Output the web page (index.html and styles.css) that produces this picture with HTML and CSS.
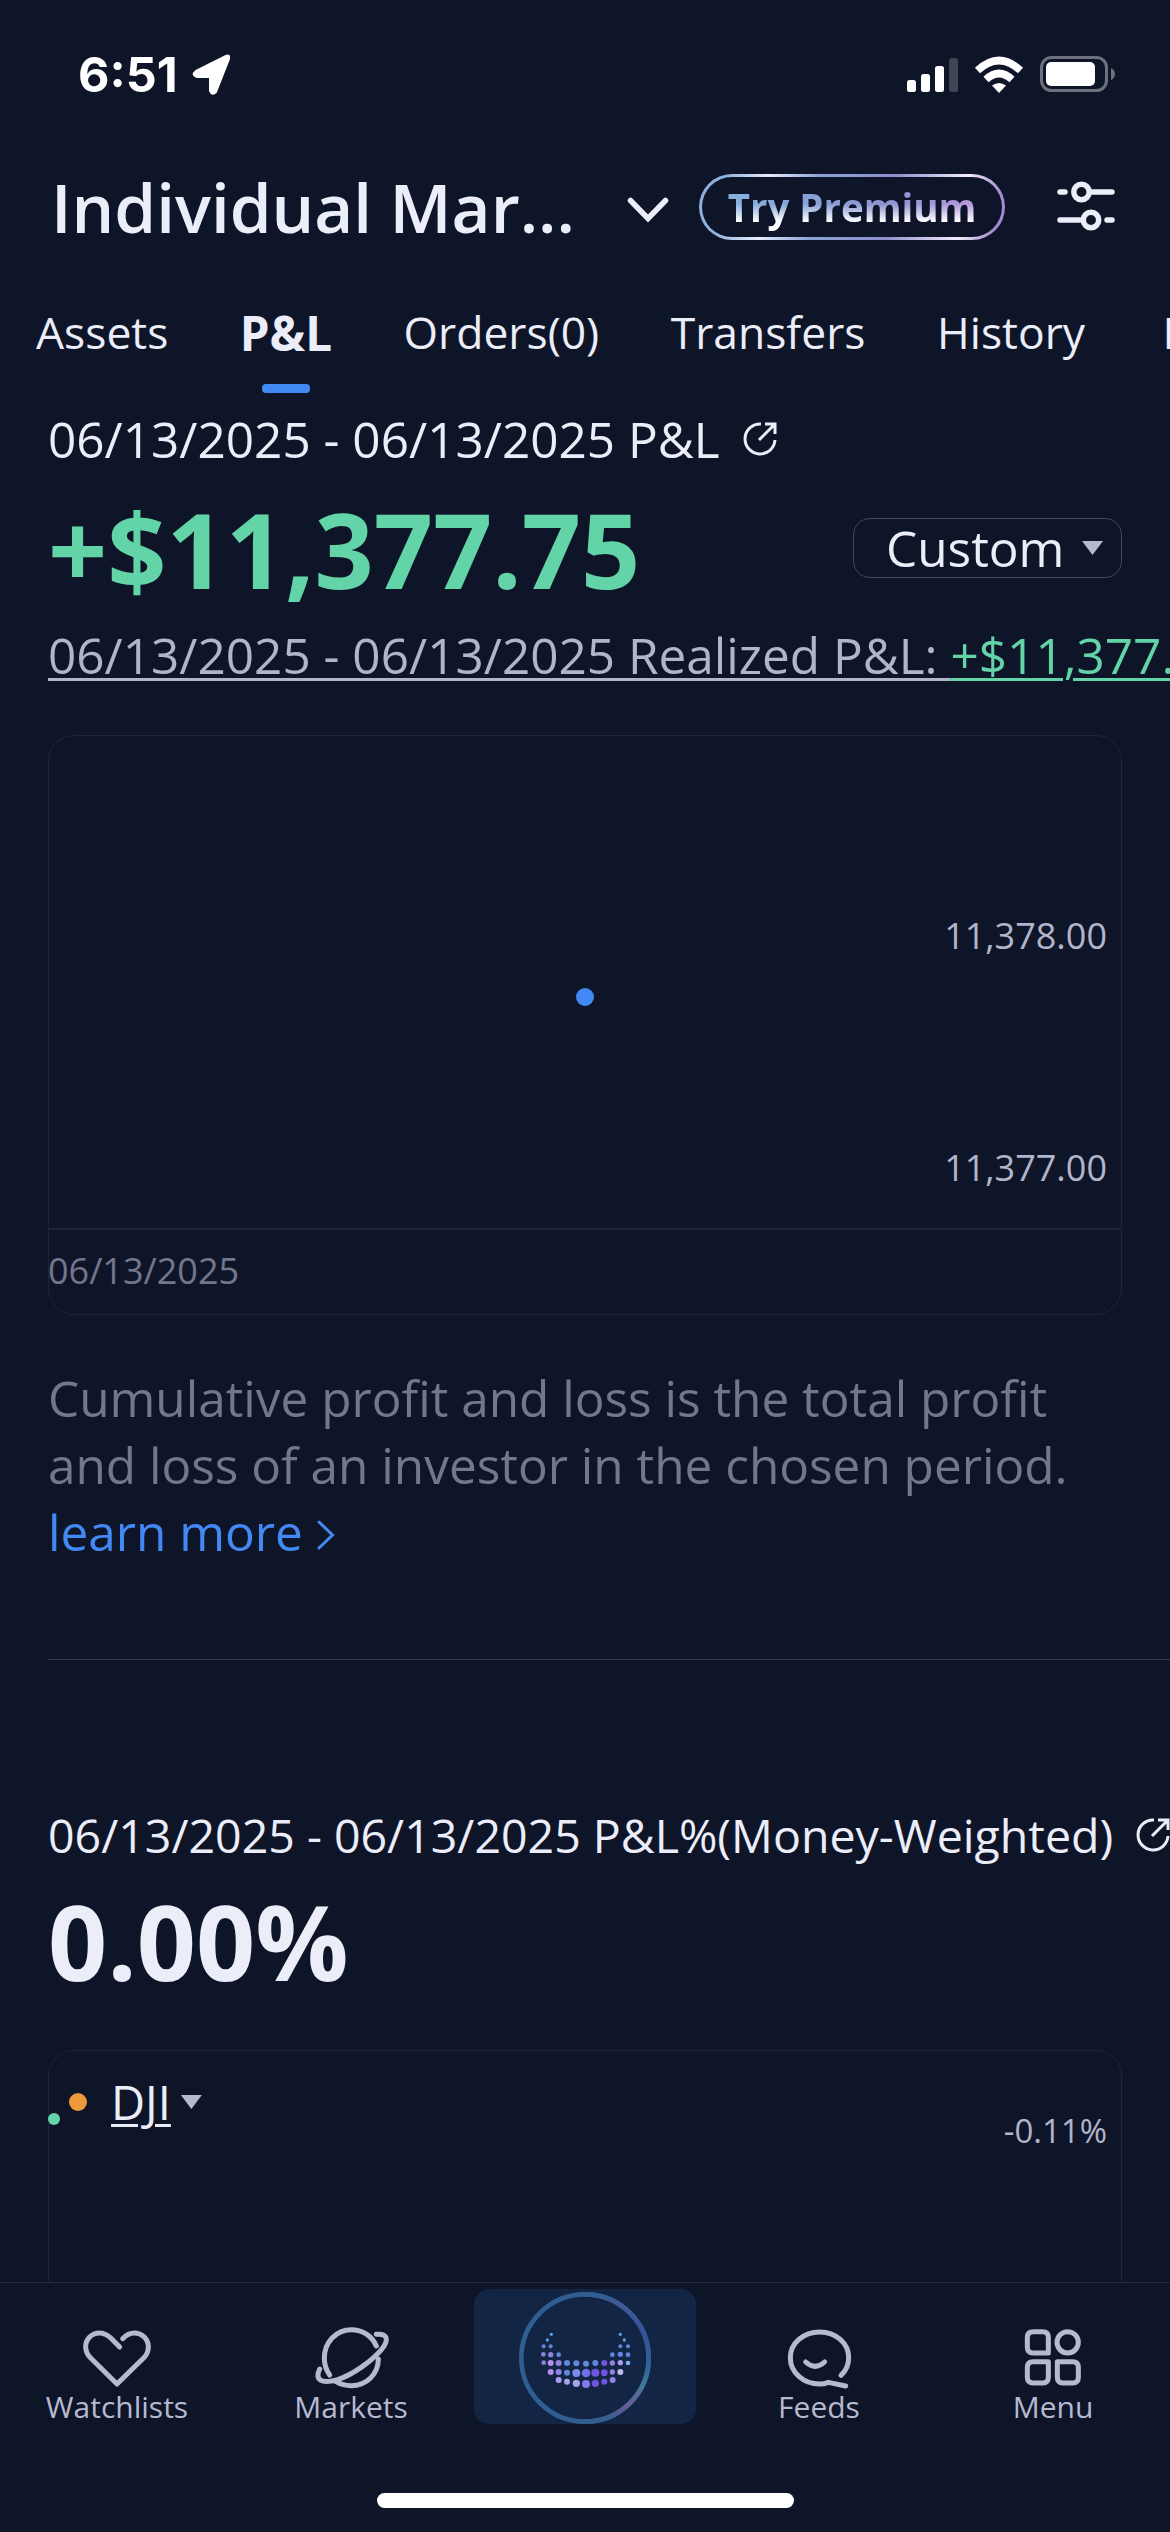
FILE: index.html
```html
<!DOCTYPE html>
<html lang="en">
<head>
    <meta charset="utf-8">
    <title>Account P&amp;L</title>
    <link rel="stylesheet" href="styles.css">
</head>
<body>
    <div class="status-bar">
        <span class="time">6:51</span>
        <svg class="location" width="40" height="44" viewBox="0 0 40 44">
            <path d="M4 18 L34 3 Q38 1 37 6 L24 39 Q20 43 18 38 V24 H5 Q-1 22 4 18Z" fill="#fff" stroke="#fff" stroke-width="2" stroke-linejoin="round"/>
        </svg>
        <svg class="signal" width="52" height="36" viewBox="0 0 52 36">
            <rect x="0" y="23" width="9" height="12" rx="2.5" fill="#fff"/>
            <rect x="14" y="17" width="9" height="18" rx="2.5" fill="#fff"/>
            <rect x="28" y="9" width="9" height="26" rx="2.5" fill="#fff"/>
            <rect x="42" y="1" width="9" height="34" rx="2.5" fill="#404453"/>
        </svg>
        <svg class="wifi" width="50" height="38" viewBox="0 0 50 38">
            <g fill="none" stroke="#fff" stroke-width="7.5">
                <path d="M3.5 14.5 Q25 -5.5 46.5 14.5"/>
                <path d="M12 23.5 Q25 11.5 38 23.5"/>
            </g>
            <path d="M18 29.5 Q25 24.5 32 29.5 L25 37Z" fill="#fff"/>
        </svg>
        <svg class="battery" width="76" height="38" viewBox="0 0 76 38">
            <rect x="1.5" y="1.5" width="65" height="33" rx="10" fill="none" stroke="#6d707d" stroke-width="3"/>
            <rect x="6" y="6" width="49" height="24" rx="5" fill="#fff"/>
            <path d="M71 12 Q75 14 75 18 Q75 22 71 24Z" fill="#6d707d"/>
        </svg>
    </div>

    <div class="header">
        <h1>Individual Mar...</h1>
        <svg class="chevron" width="44" height="30" viewBox="0 0 44 30">
            <path d="M4.5 5.5 L22 23.5 L39.5 5.5" fill="none" stroke="#ebedf8" stroke-width="5.5" stroke-linecap="round"/>
        </svg>
        <div class="premium"><span>Try Premium</span></div>
        <svg class="sliders" width="60" height="52" viewBox="0 0 60 52">
            <g fill="none" stroke="#ebedf8" stroke-width="5.5" stroke-linecap="round">
                <path d="M4 11 H9 M36 11 H56 M4 39 H24 M51 39 H56"/>
                <circle cx="25.5" cy="11" r="7.7"/>
                <circle cx="35" cy="39" r="7.7"/>
            </g>
        </svg>
    </div>

    <div class="tabs">
        <span>Assets</span>
        <span class="active">P&amp;L</span>
        <span>Orders(0)</span>
        <span>Transfers</span>
        <span>History</span>
        <span class="last">Documents</span>
    </div>

    <div class="content">
        <div class="title">
            <span>06/13/2025 - 06/13/2025 P&amp;L</span>
            <svg class="share" width="36" height="36" viewBox="0 0 36 36">
                <path d="M19 3 A15 15 0 1 0 33 19 M17 19 L32 4 M23 3 H33 V13" fill="none" stroke="#ebedf8" stroke-width="3"/>
            </svg>
        </div>
        <div class="value-row">
            <div class="value gain">+$11,377.75</div>
            <div class="select">Custom <i class="caret"></i></div>
        </div>
        <div class="realized">06/13/2025 - 06/13/2025 Realized P&amp;L: <span class="gain">+$11,377.75</span></div>

        <div class="chart">
            <div class="plot">
                <span class="axis-label high">11,378.00</span>
                <span class="axis-label low">11,377.00</span>
                <i class="point"></i>
            </div>
            <div class="chart-date">06/13/2025</div>
        </div>

        <p class="note">
            Cumulative profit and loss is the total profit<br>
            and loss of an investor in the chosen period.<br>
            <a>learn more<svg class="more" width="18" height="30" viewBox="0 0 18 30"><path d="M2 2 L15.5 15 L2 28" fill="none" stroke="#4389f6" stroke-width="3" stroke-linecap="round"/></svg></a>
        </p>

        <div class="divider"></div>

        <div class="title small">
            <span>06/13/2025 - 06/13/2025 P&amp;L%(Money-Weighted)</span>
            <svg class="share" width="36" height="36" viewBox="0 0 36 36">
                <path d="M19 3 A15 15 0 1 0 33 19 M17 19 L32 4 M23 3 H33 V13" fill="none" stroke="#ebedf8" stroke-width="3"/>
            </svg>
        </div>
        <div class="value-row second">
            <div class="value">0.00%</div>
        </div>

        <div class="chart benchmark">
            <div class="legend">
                <i class="dot"></i>
                <span>DJI</span>
                <i class="caret"></i>
            </div>
            <i class="start"></i>
            <span class="axis-label percent">-0.11%</span>
        </div>
    </div>

    <div class="nav">
        <div class="nav-item">
            <svg width="72" height="72" viewBox="243 187 216 216">
                <path d="M359 262 L330 233 Q314 220 299 220 A41 41 0 0 0 257 262 Q257 280 272 295 L351 373 L433 293 Q445 280 445 262 A42 42 0 0 0 403 220 Q384 220 368 237"/>
            </svg>
            <span>Watchlists</span>
        </div>
        <div class="nav-item">
            <svg width="72" height="72" viewBox="945 187 216 216">
                <path d="M1129 259 C1116 229 1088 210 1054 210 C1008 210 973 248 973 295 C973 314 979 332 989 346"/>
                <path d="M1135 298 C1135 343 1100 378 1054 378 C1038 378 1022 374 1008 366"/>
                <path d="M1129 224 C1160 221 1170 237 1145 269 C1116 303 1062 343 1015 359 C962 375 944 360 959 328"/>
            </svg>
            <span>Markets</span>
        </div>
        <div class="nav-item center">
            <svg width="222" height="135" viewBox="42 57 666 405">
                <defs>
                    <linearGradient id="ring" x1="0" y1="0" x2="0" y2="1">
                        <stop offset="0" stop-color="#2f5e91"/>
                        <stop offset=".09" stop-color="#435a94"/>
                        <stop offset=".3" stop-color="#34529a"/>
                        <stop offset=".55" stop-color="#32609a"/>
                        <stop offset=".72" stop-color="#44799a"/>
                        <stop offset=".87" stop-color="#675b96"/>
                        <stop offset="1" stop-color="#2f5e91"/>
                    </linearGradient>
                </defs>
                <circle cx="375" cy="264" r="191" fill="none" stroke="#2f5e91" stroke-width="14"/>
                <path d="M375 73 A191 191 0 0 1 375 455" fill="none" stroke="url(#ring)" stroke-width="14"/>
                <g fill="#5b9de0">
                    <circle cx="274" cy="193" r="5"/><circle cx="262" cy="210" r="5"/>
                    <circle cx="481" cy="193" r="5"/><circle cx="493" cy="210" r="5"/>
                </g>
                <g fill="#6287dc">
                    <circle cx="251" cy="229" r="6"/><circle cx="272" cy="229" r="6"/>
                    <circle cx="481" cy="229" r="6"/><circle cx="504" cy="229" r="6"/>
                    <circle cx="296" cy="254" r="7"/><circle cx="457" cy="254" r="7"/>
                    <circle cx="481" cy="253" r="8"/><circle cx="504" cy="254" r="7"/>
                    <circle cx="321" cy="279" r="9"/><circle cx="349" cy="280" r="9"/>
                    <circle cx="378" cy="281" r="9"/><circle cx="406" cy="279" r="9"/>
                    <circle cx="321" cy="308" r="9"/>
                </g>
                <g fill="#9182df">
                    <circle cx="250" cy="253" r="7"/><circle cx="272" cy="254" r="8"/>
                    <circle cx="251" cy="278" r="7"/><circle cx="296" cy="279" r="9"/>
                    <circle cx="457" cy="279" r="8"/><circle cx="296" cy="306" r="9"/>
                    <circle cx="457" cy="306" r="8"/><circle cx="458" cy="330" r="9"/>
                </g>
                <g fill="#b58df0">
                    <circle cx="272" cy="279" r="9"/><circle cx="272" cy="306" r="9"/>
                </g>
                <g fill="#aaa0ec">
                    <circle cx="481" cy="278" r="8"/><circle cx="296" cy="330" r="9"/>
                    <circle cx="321" cy="335" r="9"/><circle cx="349" cy="340" r="11"/>
                </g>
                <circle cx="504" cy="279" r="7" fill="#78b0ed"/>
                <circle cx="481" cy="306" r="9" fill="#c4bcef"/>
                <circle cx="349" cy="309" r="12" fill="#7c8bea"/>
                <circle cx="378" cy="309" r="13" fill="#6c6fe7"/>
                <g fill="#6d55dd">
                    <circle cx="433" cy="279" r="9"/><circle cx="406" cy="308" r="12"/>
                    <circle cx="433" cy="308" r="10"/><circle cx="406" cy="340" r="11"/>
                    <circle cx="433" cy="335" r="9"/>
                </g>
                <circle cx="378" cy="342" r="12" fill="#8179e9"/>
            </svg>
        </div>
        <div class="nav-item">
            <svg width="72" height="72" viewBox="129 187 216 216">
                <path d="M303 347 C316 335 326 316 326 294 C326 251 288 217 239 217 C190 217 151 251 151 294 C151 338 190 373 239 373 Q252 373 265 368 L317 379"/>
                <path d="M197 307 Q225 333 254 307"/>
            </svg>
            <span>Feeds</span>
        </div>
        <div class="nav-item">
            <svg width="72" height="72" viewBox="831 187 216 216">
                <path d="M880 216 H908 Q925 216 925 233 V280 H880 Q862 280 862 263 V233 Q862 216 880 216Z"/>
                <circle cx="983" cy="248" r="32"/>
                <path d="M880 306 H925 V353 Q925 370 908 370 H880 Q862 370 862 353 V323 Q862 306 880 306Z"/>
                <path d="M952 306 H998 Q1015 306 1015 323 V353 Q1015 370 998 370 H969 Q952 370 952 353Z"/>
            </svg>
            <span>Menu</span>
        </div>
        <div class="home-indicator"></div>
    </div>
</body>
</html>
```
FILE: styles.css
```css
* {
    box-sizing: border-box;
}
body {
    margin: 0;
    width: 1170px;
    height: 2532px;
    overflow: hidden;
    display: flex;
    flex-direction: column;
    background: #0f1528;
    color: #ebedf8;
    font-family: "Open Sans", "Noto Sans", sans-serif;
    font-size: 49.5px;
    font-variant-ligatures: none;
    white-space: nowrap;
}
svg {
    display: block;
    flex: none;
    overflow: visible;
}

/* Status bar */
.status-bar {
    height: 150px;
    padding: 0 54px 0 78px;
    display: flex;
    align-items: center;
    flex: none;
}
.time {
    width: 114px;
    font: bold 48.5px/50px Inter, sans-serif;
    color: #fff;
}
.signal {
    margin-left: auto;
    margin-right: -1px;
}
.wifi {
    margin: 0 16px;
}

/* Header */
.header {
    height: 114px;
    padding: 0 54px 0 51px;
    display: flex;
    align-items: center;
    flex: none;
}
h1 {
    margin: 0;
    width: 575px;
    font-size: 67.3px;
    font-weight: 600;
    line-height: 90px;
}
.chevron {
    margin-top: 6px;
}
.premium {
    margin: 0 auto 0 29px;
    width: 306px;
    height: 66px;
    border: 3px solid transparent;
    border-radius: 33px;
    text-align: center;
    font-size: 38.5px;
    font-weight: bold;
    line-height: 60px;
    background:
        linear-gradient(#0f1528, #0f1528) padding-box,
        linear-gradient(100deg, #8db0dd 8%, #e6ecfa 22%, #8ba3d6 38%, #8d8fce 62%, #f2ecfb 85%, #a48bd2 96%) border-box;
}
.premium span {
    display: block;
    background: linear-gradient(transparent 45%, #fff 74%), linear-gradient(90deg, #86b2de 8%, #8b93d0 60%, #b49add 90%);
    -webkit-background-clip: text;
    background-clip: text;
    color: transparent;
}

/* Tabs */
.tabs {
    height: 137px;
    padding-left: 36px;
    display: flex;
    gap: 71.5px;
    flex: none;
    font-size: 44.4px;
    line-height: 137px;
}
.tabs .active {
    position: relative;
    font-size: 47.5px;
    font-weight: bold;
}
.tabs .active::after {
    content: '';
    position: absolute;
    left: calc(50% - 24px);
    bottom: 8px;
    width: 48px;
    height: 9px;
    border-radius: 4px;
    background: #4389f6;
}
.tabs .last {
    margin-left: 6px;
}

/* Page content */
.content {
    flex: 1;
    min-height: 0;
    overflow: hidden;
    padding-left: 48px;
}
.title {
    height: 75px;
    display: flex;
    align-items: center;
    gap: 22px;
}
.title.small {
    font-size: 46.5px;
    margin-top: 137px;
}
.value-row {
    height: 144px;
    padding-right: 48px;
    display: flex;
    align-items: center;
    justify-content: space-between;
}
.value-row.second {
    height: 137px;
}
.value {
    font-size: 103.6px;
    font-weight: bold;
}
.gain {
    color: #63d4a8;
}
.select {
    width: 269px;
    height: 60px;
    padding: 0 18px 0 32px;
    display: flex;
    align-items: center;
    justify-content: space-between;
    border: 1px solid #43485a;
    border-radius: 17px;
    line-height: 58px;
}
.caret {
    width: 21px;
    height: 14px;
    background: #b6b9d1;
    clip-path: polygon(0 0, 100% 0, 50% 100%);
}
.realized {
    height: 71px;
    line-height: 71px;
    color: #b1b4ca;
    text-decoration: underline;
    text-decoration-thickness: 3px;
    text-underline-offset: 4px;
}
.realized .gain {
    text-decoration: underline;
    text-decoration-thickness: 3px;
    text-underline-offset: 4px;
}

/* Charts */
.chart {
    position: relative;
    width: 1074px;
    height: 580px;
    margin-top: 44px;
    border: 1px solid #1f2537;
    border-radius: 26px;
}
.plot {
    height: 494px;
    border-bottom: 2px solid #1f2537;
}
.axis-label {
    position: absolute;
    right: 14px;
    font-size: 36px;
    line-height: 44px;
    color: #b1b4ca;
}
.high {
    top: 178px;
}
.low {
    top: 410px;
}
.point {
    position: absolute;
    left: 527px;
    top: 252px;
    width: 18px;
    height: 18px;
    border-radius: 50%;
    background: #4389f6;
}
.chart-date {
    margin-left: -1px;
    font-size: 36px;
    line-height: 82px;
    color: #73768c;
}
.note {
    margin: 50px 0 93px;
    line-height: 67px;
    color: #73768c;
}
.note a {
    display: flex;
    align-items: center;
    gap: 14px;
    color: #4389f6;
}
.more {
    margin-top: 4px;
}
.divider {
    height: 1px;
    background: #34394b;
}
.benchmark {
    margin-top: 41px;
}
.legend {
    height: 102px;
    padding-left: 20px;
    display: flex;
    align-items: center;
    font-size: 47px;
}
.legend span {
    margin: 0 10px 0 24px;
    text-decoration: underline;
    text-decoration-thickness: 3px;
    text-underline-offset: 4px;
}
.dot {
    width: 18px;
    height: 18px;
    border-radius: 50%;
    background: #ef9a3a;
}
.start {
    position: absolute;
    left: -1px;
    top: 62px;
    width: 12px;
    height: 12px;
    border-radius: 50%;
    background: #63d4a8;
}
.percent {
    top: 58px;
    font-size: 33px;
}

/* Bottom navigation */
.nav {
    position: relative;
    height: 250px;
    border-top: 1px solid #242a3b;
    display: flex;
    flex: none;
    background: #0f1528;
}
.nav-item {
    width: 234px;
    padding-top: 39px;
    display: flex;
    flex-direction: column;
    align-items: center;
    font-size: 30px;
    line-height: 25px;
    color: #b6b9d1;
}
.nav-item svg {
    fill: none;
    stroke: #b6b9d1;
    stroke-width: 15;
    stroke-linecap: round;
    stroke-linejoin: round;
}
.nav-item.center {
    padding-top: 6px;
}
.nav-item.center svg {
    border-radius: 15px;
    background: #132545;
    stroke: none;
}
.home-indicator {
    position: absolute;
    left: 377px;
    bottom: 24px;
    width: 417px;
    height: 15px;
    border-radius: 8px;
    background: #fff;
}
```
